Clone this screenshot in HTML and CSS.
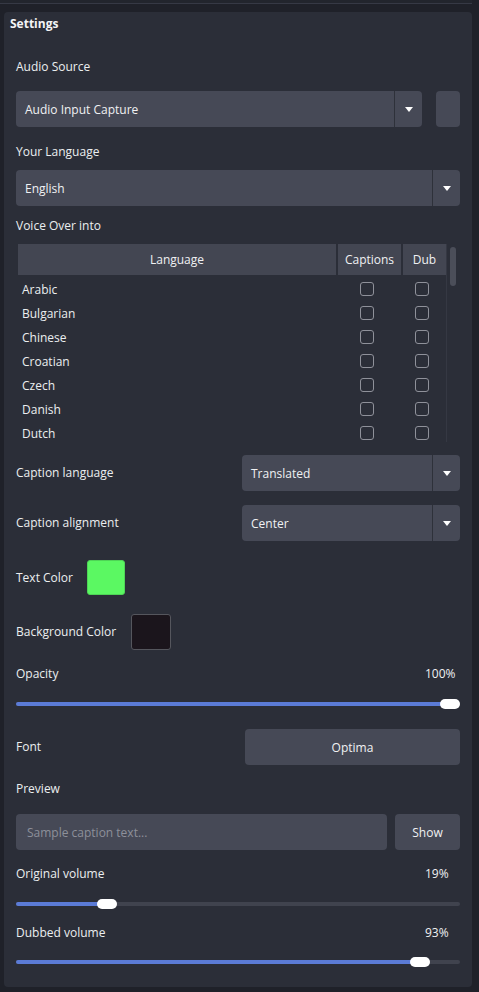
FILE: index.html
```html
<!DOCTYPE html>
<html lang="en">
<head>
<meta charset="utf-8">
<title>Settings</title>
<link rel="stylesheet" href="styles.css">
</head>
<body>
<div class="topline"></div>
<section class="panel">
  <h2 class="title">Settings</h2>
  <div class="form">
    <div class="label mt-25">Audio Source</div>
    <div class="source-row mt-15">
      <div class="combo grow"><span class="combo-text">Audio Input Capture</span><span class="combo-arrow"></span></div>
      <div class="square-btn"></div>
    </div>

    <div class="label mt-16">Your Language</div>
    <div class="combo mt-9"><span class="combo-text">English</span><span class="combo-arrow"></span></div>

    <div class="label mt-11">Voice Over into</div>
    <div class="table-wrap mt-9">
      <div class="table">
        <div class="thead">
          <div class="th">Language</div>
          <div class="th">Captions</div>
          <div class="th">Dub</div>
        </div>
        <div class="tr"><div class="td">Arabic</div><div class="tc"><span class="cb"></span></div><div class="tc"><span class="cb"></span></div></div>
        <div class="tr"><div class="td">Bulgarian</div><div class="tc"><span class="cb"></span></div><div class="tc"><span class="cb"></span></div></div>
        <div class="tr"><div class="td">Chinese</div><div class="tc"><span class="cb"></span></div><div class="tc"><span class="cb"></span></div></div>
        <div class="tr"><div class="td">Croatian</div><div class="tc"><span class="cb"></span></div><div class="tc"><span class="cb"></span></div></div>
        <div class="tr"><div class="td">Czech</div><div class="tc"><span class="cb"></span></div><div class="tc"><span class="cb"></span></div></div>
        <div class="tr"><div class="td">Danish</div><div class="tc"><span class="cb"></span></div><div class="tc"><span class="cb"></span></div></div>
        <div class="tr"><div class="td">Dutch</div><div class="tc"><span class="cb"></span></div><div class="tc"><span class="cb"></span></div></div>
      </div>
      <div class="scroll"><div class="scroll-handle"></div></div>
    </div>

    <div class="field-row mt-13">
      <div class="label">Caption language</div>
      <div class="combo half"><span class="combo-text">Translated</span><span class="combo-arrow"></span></div>
    </div>
    <div class="field-row mt-14">
      <div class="label">Caption alignment</div>
      <div class="combo half"><span class="combo-text">Center</span><span class="combo-arrow"></span></div>
    </div>

    <div class="color-row mt-19">
      <div class="label">Text Color</div>
      <div class="swatch swatch-green"></div>
    </div>
    <div class="color-row mt-19">
      <div class="label">Background Color</div>
      <div class="swatch swatch-dark"></div>
    </div>

    <div class="value-head mt-15"><span class="label">Opacity</span><span class="value">100%</span></div>
    <div class="slider mt-16" style="--v:1"><div class="slider-fill"></div><div class="slider-handle"></div></div>

    <div class="field-row mt-20">
      <div class="label">Font</div>
      <div class="button font-btn">Optima</div>
    </div>

    <div class="label mt-15">Preview</div>
    <div class="preview-row mt-16">
      <div class="input">Sample caption text...</div>
      <div class="button show-btn">Show</div>
    </div>

    <div class="value-head mt-15"><span class="label">Original volume</span><span class="value">19%</span></div>
    <div class="slider mt-16" style="--v:0.19"><div class="slider-fill"></div><div class="slider-handle"></div></div>

    <div class="value-head mt-15"><span class="label">Dubbed volume</span><span class="value">93%</span></div>
    <div class="slider mt-15" style="--v:0.93"><div class="slider-fill"></div><div class="slider-handle"></div></div>
  </div>
</section>
</body>
</html>
```

FILE: styles.css
```css
* { box-sizing: border-box; }

html, body {
  margin: 0;
  padding: 0;
  background: #1f2129;
  font-family: "Open Sans", "Noto Sans", sans-serif;
  font-size: 12px;
  font-weight: 500;
  color: #eceef0;
}

.topline {
  height: 4px;
  margin-right: 7px;
  border-bottom: 1px solid #363945;
  background: #22252d;
}

.panel {
  margin: 8px 7px 0 4px;
  background: #2b2e38;
  border-radius: 4px;
  padding: 3px 0 20px;
}

.title {
  margin: 0;
  padding-left: 6px;
  font-size: 12px;
  font-weight: 700;
  line-height: 18px;
  color: #f4f4f6;
}

.form {
  display: flex;
  flex-direction: column;
  padding: 0 12px;
}

.mt-9 { margin-top: 9px; }
.mt-11 { margin-top: 11px; }
.mt-13 { margin-top: 13px; }
.mt-14 { margin-top: 14px; }
.mt-15 { margin-top: 15px; }
.mt-16 { margin-top: 16px; }
.mt-19 { margin-top: 19px; }
.mt-20 { margin-top: 20px; }
.mt-25 { margin-top: 25px; }

.label {
  line-height: 18px;
  color: #eceef0;
  white-space: nowrap;
}

/* combo boxes */
.combo {
  display: flex;
  align-items: stretch;
  height: 36px;
  background: #464956;
  border-radius: 4px;
  color: #f0f1f3;
}
.combo-text {
  flex: 1;
  display: flex;
  align-items: center;
  padding-left: 9px;
}
.combo-arrow {
  width: 28px;
  border-left: 1px solid #2e313a;
  display: flex;
  align-items: center;
  justify-content: center;
}
.combo-arrow::after {
  content: "";
  width: 0;
  height: 0;
  border-left: 4.5px solid transparent;
  border-right: 4.5px solid transparent;
  border-top: 5px solid #ffffff;
  margin-top: 1px;
}
.grow { flex: 1; }
.half { width: 218px; }

.source-row {
  display: flex;
  gap: 14px;
}
.square-btn {
  width: 24px;
  height: 36px;
  background: #464956;
  border-radius: 4px;
}

/* table */
.table-wrap {
  display: flex;
  height: 198px;
  overflow: hidden;
}
.table {
  width: 431px;
  padding-left: 2px;
  border-right: 1px solid #353843;
}
.thead, .tr {
  display: grid;
  grid-template-columns: 318px 63px 43px;
  column-gap: 2px;
}
.thead {
  height: 31px;
  margin-bottom: 2px;
}
.th {
  background: #434652;
  display: flex;
  align-items: center;
  justify-content: center;
  color: #f0f1f3;
}
.tr { height: 24px; }
.td {
  display: flex;
  align-items: center;
  padding-left: 4px;
  color: #eceef0;
}
.tc {
  display: flex;
  align-items: center;
  justify-content: center;
  padding-right: 6px;
}
.cb {
  width: 14px;
  height: 14px;
  border: 1px solid #8f919a;
  border-radius: 3px;
  background: #2b2e38;
}
.scroll {
  flex: 1;
  padding: 3px 0 0 3px;
}
.scroll-handle {
  width: 6px;
  height: 39px;
  background: #4b4e59;
  border-radius: 3px;
}

/* rows with label + control */
.field-row {
  display: flex;
  align-items: center;
  justify-content: space-between;
}
.color-row {
  display: flex;
  align-items: center;
  gap: 15px;
}
.swatch { border-radius: 3px; }
.swatch-green {
  width: 38px;
  height: 35px;
  margin-left: -1px;
  background: #5bf862;
  border: 1px solid #4ed556;
}
.swatch-dark {
  width: 40px;
  height: 36px;
  background: #1b151c;
  border: 1px solid #55565d;
}

.value-head {
  display: flex;
  justify-content: space-between;
  line-height: 18px;
}
.value {
  width: 35px;
  color: #f0f1f3;
}

/* sliders */
.slider {
  position: relative;
  height: 10px;
}
.slider::before {
  content: "";
  position: absolute;
  left: 0;
  right: 0;
  top: 3px;
  height: 4px;
  border-radius: 2px;
  background: #40434e;
}
.slider-fill {
  position: absolute;
  left: 0;
  top: 3px;
  height: 4px;
  border-radius: 2px;
  background: #5b7bd6;
  width: calc((100% - 20px) * var(--v) + 10px);
}
.slider-handle {
  position: absolute;
  top: 0;
  left: calc((100% - 20px) * var(--v));
  width: 20px;
  height: 10px;
  border-radius: 5px;
  background: #ffffff;
}

/* buttons and input */
.button {
  height: 36px;
  background: #464956;
  border-radius: 4px;
  display: flex;
  align-items: center;
  justify-content: center;
  color: #f0f1f3;
}
.font-btn { width: 215px; }
.preview-row {
  display: flex;
  gap: 8px;
}
.input {
  flex: 1;
  height: 36px;
  background: #464956;
  border-radius: 4px;
  display: flex;
  align-items: center;
  padding-left: 11px;
  color: #8d909a;
}
.show-btn { width: 65px; }
```
